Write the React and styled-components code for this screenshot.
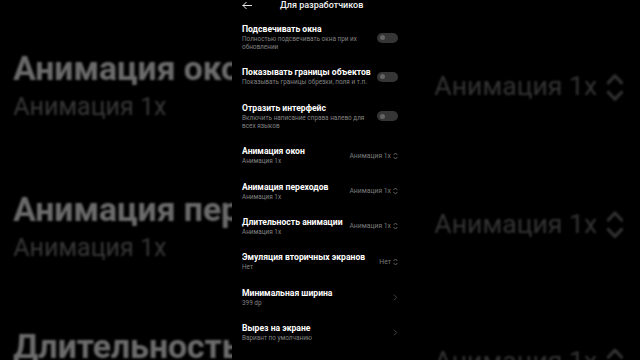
import styled, { createGlobalStyle } from "styled-components";

const GlobalStyle = createGlobalStyle`
  html, body {
    margin: 0;
    padding: 0;
    background: #000;
  }
  body {
    font-family: Roboto, "Noto Sans", "DejaVu Sans", sans-serif;
  }
`;

const rows = [
  { title: "Подсвечивать окна", sub: "Полностью подсвечивать окна при их\nобновлении", kind: "toggle" },
  { title: "Показывать границы объектов", sub: "Показывать границы обрезки, поля и т.п.", kind: "toggle" },
  { title: "Отразить интерфейс", sub: "Включить написание справа налево для\nвсех языков", kind: "toggle" },
  { title: "Анимация окон", sub: "Анимация 1x", kind: "select", value: "Анимация 1x" },
  { title: "Анимация переходов", sub: "Анимация 1x", kind: "select", value: "Анимация 1x" },
  { title: "Длительность анимации", sub: "Анимация 1x", kind: "select", value: "Анимация 1x" },
  { title: "Эмуляция вторичных экранов", sub: "Нет", kind: "select", value: "Нет" },
  { title: "Минимальная ширина", sub: "399 dp", kind: "nav" },
  { title: "Вырез на экране", sub: "Вариант по умолчанию", kind: "nav" },
];

const Stage = styled.div`
  position: relative;
  width: 640px;
  height: 360px;
  overflow: hidden;
  background: #000;
  display: flex;
  justify-content: center;
`;

const Backdrop = styled.div`
  position: absolute;
  inset: 0;
  overflow: hidden;
  pointer-events: none;
`;

const BackdropScale = styled.div`
  position: absolute;
  left: -26px;
  top: -524px;
  transform: scale(3.92);
  transform-origin: 0 0;
  opacity: 0.42;
  filter: blur(0.3px);
`;

const Screen = styled.div`
  position: relative;
  z-index: 1;
  width: 176px;
  height: 360px;
  background: #000;
  color: #fff;
`;

const Header = styled.div`
  height: 16px;
  display: flex;
  align-items: flex-start;
  padding: 0 10px;
  box-sizing: border-box;
`;

const HeaderTitle = styled.div`
  margin-left: 28px;
  font-size: 9px;
  line-height: 11px;
  font-weight: 500;
  color: #f2f2f2;
`;

const Row = styled.div`
  display: flex;
  align-items: center;
  gap: 8px;
  padding: 8px 10px 8.4px;
  width: 176px;
  box-sizing: border-box;
`;

const TextBlock = styled.div`
  flex: 1;
  min-width: 0;
`;

const Title = styled.div`
  font-size: 8.6px;
  line-height: 11px;
  font-weight: 700;
  color: #fff;
  white-space: nowrap;
`;

const Sub = styled.div`
  font-size: 6.4px;
  line-height: 8px;
  color: #828282;
  white-space: pre;
`;

const Toggle = styled.div`
  position: relative;
  flex: none;
  width: 21px;
  height: 10px;
  border-radius: 5px;
  background: #353535;

  &::after {
    content: "";
    position: absolute;
    left: 3px;
    top: 2.5px;
    width: 5px;
    height: 5px;
    border-radius: 50%;
    background: #646464;
  }
`;

const Value = styled.div`
  flex: none;
  display: flex;
  align-items: center;
  gap: 2px;
  font-size: 6.8px;
  line-height: 8px;
  color: #7a7a7a;
`;

const BackArrow = () => (
  <svg width="10" height="10" viewBox="0 0 10 10" fill="none" stroke="#e8e8e8" strokeWidth="1" strokeLinecap="round" strokeLinejoin="round">
    <path d="M1 5.5h8.5M4.2 2.3L1 5.5l3.2 3.2" />
  </svg>
);

const UpDown = () => (
  <svg width="5" height="8" viewBox="0 0 5 8" fill="none" stroke="#777" strokeWidth="0.8" strokeLinecap="round" strokeLinejoin="round">
    <path d="M0.8 2.8L2.5 1l1.7 1.8M0.8 5.2L2.5 7l1.7-1.8" />
  </svg>
);

const Chevron = () => (
  <svg width="5" height="7" viewBox="0 0 5 7" fill="none" stroke="#4e4e4e" strokeWidth="0.9" strokeLinecap="round" strokeLinejoin="round">
    <path d="M1.2 1l2.5 2.5-2.5 2.5" />
  </svg>
);

const SettingsList = () => (
  <>
    {rows.map((r) => (
      <Row key={r.title}>
        <TextBlock>
          <Title>{r.title}</Title>
          <Sub>{r.sub}</Sub>
        </TextBlock>
        {r.kind === "toggle" && <Toggle />}
        {r.kind === "select" && (
          <Value>
            {r.value}
            <UpDown />
          </Value>
        )}
        {r.kind === "nav" && <Chevron />}
      </Row>
    ))}
  </>
);

const ScreenContent = () => (
  <>
    <Header>
      <BackArrow />
      <HeaderTitle>Для разработчиков</HeaderTitle>
    </Header>
    <SettingsList />
  </>
);

export default function App() {
  return (
    <Stage>
      <GlobalStyle />
      <Backdrop>
        <BackdropScale>
          <ScreenContent />
        </BackdropScale>
      </Backdrop>
      <Screen>
        <ScreenContent />
      </Screen>
    </Stage>
  );
}
